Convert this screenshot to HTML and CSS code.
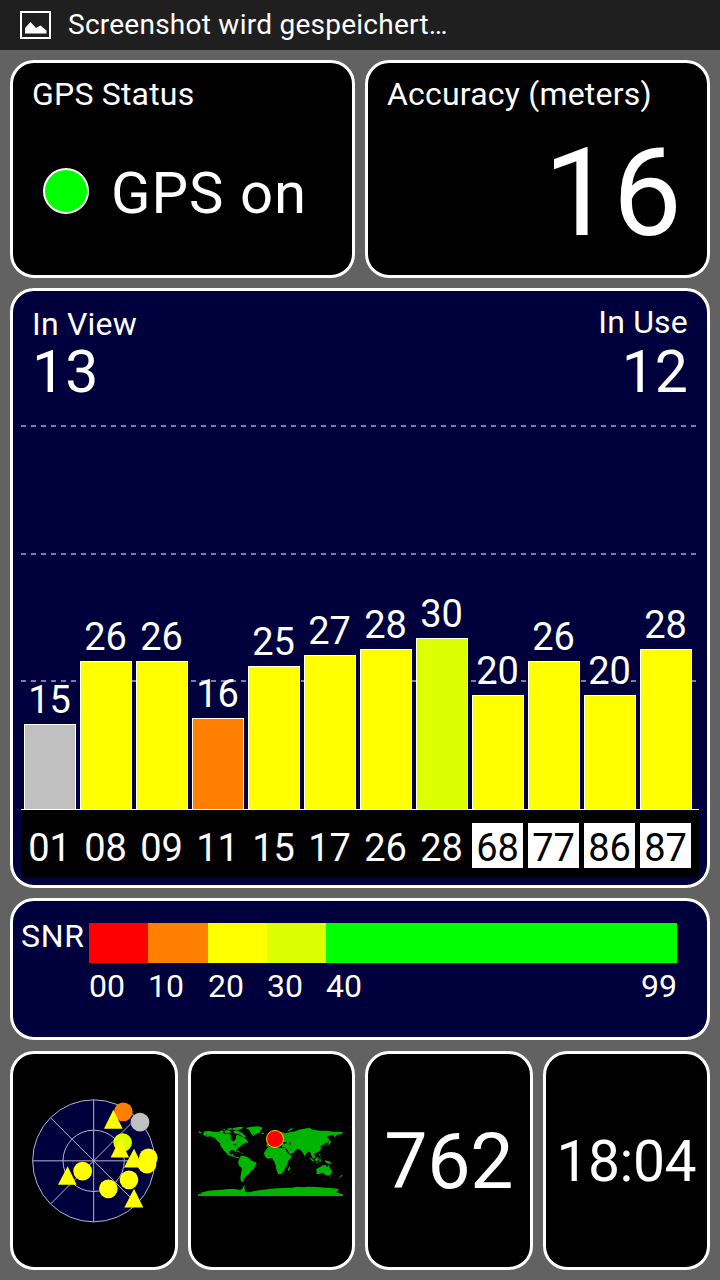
FILE: index.html
```
<!DOCTYPE html>
<html lang="de">
<head>
  <meta charset="UTF-8">
  <meta name="viewport" content="width=device-width, initial-scale=1.0">
  <title>GPS Status</title>
  <link rel="stylesheet" href="styles.css">
</head>
<body>
  <div class="statusbar">
    <svg class="icon" width="31" height="28" viewBox="0 0 31 28">
      <rect x="1" y="1" width="29" height="26" fill="none" stroke="#fff" stroke-width="2"/>
      <path d="M5 22.5V17L10.5 11L16 17L20.5 14.5L26.5 19.5V22.5Z" fill="#fff"/>
    </svg>
    <span>Screenshot wird gespeichert…</span>
  </div>

  <div class="panels">
    <div class="row top">
      <div class="card">
        <div class="title">GPS Status</div>
        <div class="gps"><span class="led"></span>GPS on</div>
      </div>
      <div class="card">
        <div class="title accuracy-title">Accuracy (meters)</div>
        <div class="accuracy">16</div>
      </div>
    </div>

    <div class="card blue satellites">
      <div class="counts">
        <div>
          <div class="title">In View</div>
          <div class="count">13</div>
        </div>
        <div class="right">
          <div class="title">In Use</div>
          <div class="count">12</div>
        </div>
      </div>
      <div class="chart" id="chart"></div>
      <div class="ids" id="ids"></div>
    </div>

    <div class="card blue snr">
      <div class="snr-label">SNR</div>
      <div class="scale">
        <span class="red"></span><span class="orange"></span><span class="yellow"></span><span class="lime"></span><span class="green"></span>
      </div>
      <div class="scale-text">
        <span>00</span><span>10</span><span>20</span><span>30</span><span>40</span><span class="last">99</span>
      </div>
    </div>

    <div class="row bottom">
      <div class="card">
        <svg class="radar" width="150" height="150" viewBox="-4 1.5 450 450">
          <g fill="#00003c" stroke="#b4b4d2" stroke-width="3">
            <circle cx="220" cy="226" r="183"/>
            <circle cx="220" cy="226" r="92"/>
            <path d="M37 226H403M220 43V409M91 97L349 355M91 355L349 97"/>
          </g>
          <circle cx="309" cy="79" r="28" fill="#ff8000"/>
          <circle cx="359" cy="110" r="28" fill="#c0c0c0"/>
          <circle cx="307" cy="171" r="28" fill="#dcff00"/>
          <g fill="#ff0">
            <circle cx="384" cy="217" r="28"/>
            <circle cx="380" cy="236" r="28"/>
            <circle cx="326" cy="283" r="28"/>
            <circle cx="264" cy="310" r="28"/>
            <circle cx="187" cy="257" r="28"/>
            <path d="M279 73L307 130H251Z"/>
            <path d="M299 159L326 216H271Z"/>
            <path d="M341 190L369 246H311Z"/>
            <path d="M142 242L169 298H113Z"/>
            <path d="M341 310L369 366H312Z"/>
          </g>
        </svg>
      </div>
      <div class="card">
        <svg class="map" width="160" height="90" viewBox="3 3 480 270">
          <g fill="#00b400">
            <!-- America -->
            <path d="M24 48L36 52L30 56ZM39 55L44 49L58 48L74 51L90 52L104 56L118 57L124 62L121 68L126 77L132 79L137 72L139 61L146 60L152 64L160 66L170 74L174 78L166 84L159 88L152 94L146 98L140 103L137 112L132 106L122 106L118 112L121 119L128 116L131 122L139 127L146 126L150 130L142 130L130 125L115 121L107 112L101 106L96 98L91 92L90 85L80 76L74 68L60 64L46 67L52 62L42 62Z"/>
            <path d="M86 50L96 46L104 51L94 55ZM102 47L114 45L124 50L120 55L106 54ZM110 41L124 39L130 43L116 45ZM130 48L140 46L156 53L168 64L162 68L152 60L140 56L132 54ZM128 40L144 36L160 36L156 41L144 45L130 45ZM96 42L106 41L104 45ZM140 66L147 66L144 71ZM168 80L176 80L172 85Z"/>
            <path d="M166 39L184 35L206 34L218 38L212 46L210 53L200 56L191 62L187 61L182 53L177 44ZM135 106L146 108L154 113L146 112ZM154 113L162 114L156 116Z"/>
            <path d="M152 123L162 122L172 126L180 131L185 137L198 142L200 147L195 154L191 163L183 167L178 176L171 181L164 188L160 195L162 201L154 200L151 190L153 176L156 160L147 151L144 141Z"/>
            <!-- Europe and Asia -->
            <path d="M229 94L230 86L238 85L233 79L240 76L248 70L244 64L250 56L262 50L274 50L285 55L298 52L306 51L318 48L326 44L342 41L354 39L370 44L388 47L410 47L430 50L459 51L456 57L442 59L434 67L430 60L421 61L411 66L418 74L412 83L404 84L408 92L402 88L396 91L391 95L394 101L388 108L378 114L372 117L376 126L370 132L365 124L361 112L355 110L347 117L344 125L339 114L333 106L324 103L318 104L311 113L299 118L292 104L286 98L275 96L277 90L268 92L262 88L258 94L250 87L240 90L238 96Z"/>
            <path d="M213 53L221 53L224 56L216 58ZM234 64L240 62L243 72L235 74ZM292 46L304 40L310 41L298 48ZM354 38L364 39L360 42ZM416 76L424 79L420 86L409 94L416 85Z"/>
            <!-- Africa -->
            <path d="M235 96L248 93L260 97L272 98L286 100L292 110L300 121L307 121L302 130L294 138L292 151L285 160L281 170L273 178L264 177L260 166L257 151L253 140L246 129L232 131L224 122L222 114L228 104ZM299 154L301 160L296 168L293 164Z"/>
            <!-- Islands and Australia -->
            <path d="M357 126L366 131L373 139L367 139ZM374 132L384 126L387 132L382 138L375 137ZM371 141L389 143L384 145ZM388 133L394 133L391 141L388 140ZM387 115L392 119L388 122ZM390 123L396 128L391 127ZM404 136L418 139L426 146L414 146L406 141Z"/>
            <path d="M379 162L390 156L399 151L407 150L411 156L416 149L419 158L426 167L424 176L417 182L407 181L399 174L387 177L380 177ZM419 185L425 185L421 189ZM454 179L458 182L451 187L444 192L450 185Z"/>
            <!-- Antarctica -->
            <path d="M24 243V238L36 237L30 234L52 228L70 226L90 225L114 222L134 222L152 225L158 220L160 214L168 211L162 217L166 224L164 230L174 232L194 228L214 225L238 222L262 220L286 219L306 218L322 215L340 217L356 215L380 216L406 218L432 220L448 223L439 231L445 234L459 238V243Z"/>
          </g>
          <!-- Lakes and seas -->
          <path d="M129 86L136 87L140 91L134 90ZM279 82L289 81L290 85L280 87ZM298 80L302 83L303 91L298 87ZM284 97L292 106L298 117L289 109ZM299 101L308 105L302 106ZM258 63L264 58L261 67Z"/>
          <circle cx="255" cy="72" r="25.5" fill="#f00" stroke="#ffd000" stroke-width="3"/>
        </svg>
      </div>
      <div class="card heading">762</div>
      <div class="card time">18:04</div>
    </div>
  </div>

  <script>
    const satelliten = [
      { id: "01", snr: 15, hoehe: 85, farbe: "grey" },
      { id: "08", snr: 26, hoehe: 148, farbe: "yellow" },
      { id: "09", snr: 26, hoehe: 148, farbe: "yellow" },
      { id: "11", snr: 16, hoehe: 91, farbe: "orange" },
      { id: "15", snr: 25, hoehe: 143, farbe: "yellow" },
      { id: "17", snr: 27, hoehe: 154, farbe: "yellow" },
      { id: "26", snr: 28, hoehe: 160, farbe: "yellow" },
      { id: "28", snr: 30, hoehe: 171, farbe: "lime" },
      { id: "68", snr: 20, hoehe: 114, farbe: "yellow", glonass: true },
      { id: "77", snr: 26, hoehe: 148, farbe: "yellow", glonass: true },
      { id: "86", snr: 20, hoehe: 114, farbe: "yellow", glonass: true },
      { id: "87", snr: 28, hoehe: 160, farbe: "yellow", glonass: true }
    ];

    document.getElementById("chart").innerHTML = satelliten.map(s =>
      `<div class="sat"><span class="value">${s.snr}</span><div class="bar ${s.farbe}" style="height:${s.hoehe}px"></div></div>`
    ).join("");

    document.getElementById("ids").innerHTML = satelliten.map(s =>
      `<span class="id${s.glonass ? " glonass" : ""}">${s.id}</span>`
    ).join("");
  </script>
</body>
</html>
```
FILE: styles.css
```
* {
  box-sizing: border-box;
}
body {
  margin: 0;
  width: 720px;
  height: 1280px;
  overflow: hidden;
  background: #626262;
  color: #fff;
  font-family: Roboto, sans-serif;
}
.statusbar {
  display: flex;
  align-items: center;
  gap: 17px;
  height: 50px;
  padding-left: 20px;
  background: #1f1f1f;
  font-size: 28px;
  line-height: 50px;
  letter-spacing: 0.25px;
}
.panels {
  display: flex;
  flex-direction: column;
  gap: 10px;
  padding: 10px;
}
.row {
  display: grid;
  gap: 10px;
}
.top {
  grid-template-columns: 1fr 1fr;
  height: 218px;
}
.card {
  min-width: 0;
  background: #000;
  border: 3px solid #fff;
  border-radius: 24px;
}
.blue {
  background: #00003c;
}
.top .card {
  padding: 12px 25px 0 19px;
}
.title {
  font-size: 32px;
  line-height: 38px;
  letter-spacing: 0.2px;
  white-space: nowrap;
}
.gps {
  display: flex;
  align-items: center;
  margin-top: 50px;
  font-size: 58px;
  line-height: 60px;
  letter-spacing: 1px;
  white-space: nowrap;
}
.led {
  width: 46px;
  height: 46px;
  margin: 0 22px 4px 11px;
  background: #0f0;
  border: 2px solid #fff;
  border-radius: 50%;
}
.accuracy {
  margin-top: 19px;
  font-size: 123px;
  line-height: 123px;
  text-align: right;
}
.satellites {
  height: 600px;
  padding: 15px 8px 0;
}
.counts {
  display: flex;
  justify-content: space-between;
  height: 96px;
  padding: 0 11px;
}
.counts .title {
  line-height: 36px;
}
.count {
  font-size: 59px;
  line-height: 60px;
}
.right {
  text-align: right;
}
.right .title {
  margin-top: -2px;
  margin-bottom: 2px;
}
.chart {
  display: flex;
  align-items: flex-end;
  gap: 4px;
  height: 408px;
  padding-left: 3px;
  border-bottom: 1px solid #fff;
  background-image:
    repeating-linear-gradient(90deg, #7c7ca4 0 5px, transparent 5px 10px),
    repeating-linear-gradient(90deg, #7c7ca4 0 5px, transparent 5px 10px),
    repeating-linear-gradient(90deg, #7c7ca4 0 5px, transparent 5px 10px);
  background-size: 675px 2px;
  background-position: 0 23px, 0 151px, 0 278px;
  background-repeat: no-repeat;
}
.sat {
  width: 52px;
  text-align: center;
}
.value {
  display: block;
  margin: 0 1px 5px 0;
  font-size: 38px;
  line-height: 38px;
}
.bar {
  border: 1px solid #fff;
  border-bottom: 0;
}
.ids {
  display: flex;
  gap: 5px;
  height: 67px;
  padding: 13px 0 0 3px;
  background: #000;
}
.id {
  width: 51px;
  height: 45px;
  padding-top: 5px;
  font-size: 38px;
  line-height: 40px;
  text-align: center;
}
.glonass {
  background: #fff;
  color: #000;
}
.snr {
  display: grid;
  grid-template-columns: 68px 588px;
  grid-template-rows: 40px 38px;
  row-gap: 4px;
  height: 142px;
  padding: 22px 8px 0;
  font-size: 32px;
  line-height: 38px;
}
.snr-label {
  margin-top: -6px;
  letter-spacing: 0.7px;
}
.scale, .scale-text {
  display: grid;
  grid-column: 2;
  grid-template-columns: 59px 60px 59px 59px 1fr;
}
.scale-text {
  grid-template-columns: 59px 60px 59px 59px 1fr 1fr;
}
.last {
  text-align: right;
}
.red {
  background: #f00;
}
.orange {
  background: #ff8000;
}
.yellow {
  background: #ff0;
}
.lime {
  background: #dcff00;
}
.green {
  background: #0f0;
}
.grey {
  background: #c0c0c0;
}
.bottom {
  grid-template-columns: repeat(4, 1fr);
  height: 219px;
  margin-top: 1px;
}
.bottom .card {
  display: flex;
  align-items: center;
  justify-content: center;
}
.bottom .heading {
  padding-top: 2px;
  font-size: 77px;
  letter-spacing: -0.3px;
}
.bottom .time {
  padding-top: 2px;
  font-size: 57px;
  letter-spacing: -0.5px;
}
```
